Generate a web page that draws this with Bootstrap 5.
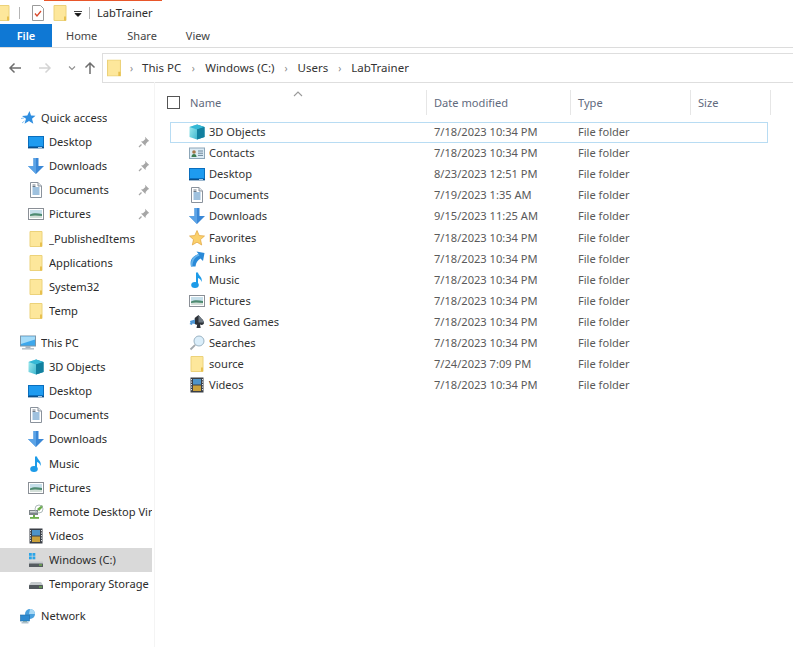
<!doctype html>
<html lang="en">
<head>
<meta charset="utf-8">
<title>LabTrainer</title>
<link href="https://cdn.jsdelivr.net/npm/bootstrap@5.3.0/dist/css/bootstrap.min.css" rel="stylesheet">
<style>
html,body{height:100%;overflow:hidden}
body{font-family:"Noto Sans","Open Sans","Liberation Sans",sans-serif;font-size:11.1px;color:#2b2b2b;background:#fff;line-height:16px}
svg{display:block;flex:none}
.shell{width:793px;height:647px;overflow:hidden}
.titlebar{height:24px;position:relative;padding-top:2px}
.accent{position:absolute;left:44px;top:0;width:118px;height:1px;background:#e8562a}
.tsep{width:1px;height:12px;background:#b5b5b5}
.tfolder{margin-right:8px}
.ttask{margin-left:10px}
.tfold2{margin-left:6px}
.tdrop{margin-left:5px}
.tsep2{margin-left:6px}
.ttext{margin-left:7px}
.tabstrip{height:24px;border-bottom:1px solid #dcdcdc}
.tabitem{height:23px;line-height:24px;color:#444;font-size:11px}
.tabfile{width:52px;background:#0f78d4;color:#fff;text-align:center;font-weight:600}
.tabhome{margin-left:14px}
.tabshare{margin-left:30px}
.tabview{margin-left:29px}
.addrrow{height:34px;padding-top:5px}
.arrowbox{width:102px}
.addrbox{height:30px;flex:1;border:1px solid #dedede;border-right:0;padding-left:4px;color:#333;font-size:11.5px}
.crumbsep{color:#8a8a8a;text-align:center;font-size:10px}
.crumb0{width:21px}
.crumb1{width:24px}
.crumb2{width:23px}
.crumb3{width:23px}
.mainrow{height:565px}
.navpane{width:155px;flex:none;border-right:1px solid #f4f4f4;padding-top:24px;overflow:hidden}
.navrow{height:24.12px;width:152px;white-space:nowrap;overflow:hidden;padding-left:28px}
.navtop{padding-left:20px}
.navrow .navtxt{margin-left:5px;overflow:hidden}
.navrow.navsel{background:#d9d9d9}
.navgap{height:8px}
.navpin{margin-left:auto;margin-right:2px}
.listpane{flex:1;min-width:0;padding-left:12px;position:relative}
.headrow{height:25px;margin-top:8px;color:#5f6a7d;margin-bottom:7px}
.colname{width:260px;position:relative}
.hcheck{width:13px;height:13px;border:1px solid #555;margin-right:10px;flex:none}
.coldate{width:144px}
.coltype{width:120px}
.colsize{width:80px}
.hcell{border-right:1px solid #e6e6e6;height:25px}
.hpad{padding-left:7px}
.sorter{position:absolute;left:126px;top:1px}
.filerow{height:21.1px;width:598px;margin-left:3px;border:1px solid transparent;color:#333;padding-bottom:1px}
.filerow.filesel{border-color:#b8dcf3}
.filename{width:256px;padding-left:18px;flex:none}
.filename .navtxt{margin-left:4px}
.filedate{width:144px;flex:none;color:#5a5a5a;padding-left:7px}
.filetype{width:120px;flex:none;color:#5a5a5a;padding-left:7px}
</style>
</head>
<body>
<svg width="0" height="0" class="position-absolute">
<defs>
<linearGradient id="g3d" x1="0" y1="0" x2="1" y2="1"><stop offset="0" stop-color="#a6eef0"/><stop offset="1" stop-color="#3fb7cf"/></linearGradient>
<symbol id="i-folder" viewBox="0 0 16 16"><path d="M2 0.500h12v15H2z" fill="#fde79b" stroke="#ecd27a"/><path d="M12 15.500v-4h2v4z" fill="#e8c04e"/></symbol>
<symbol id="i-desktop" viewBox="0 0 16 16"><rect x="0" y="2" width="16" height="12" fill="#0b84e3"/><rect x="0.500" y="2.500" width="15" height="10" fill="#1e9bf0" stroke="#0a6ebd"/><rect x="0" y="13" width="16" height="1.400" fill="#0b4f8a"/><rect x="10" y="13.200" width="4" height=".8" fill="#cfe6f8"/></symbol>
<symbol id="i-down" viewBox="0 0 16 16"><path d="M5.500 0h5v8H16l-8 8-8-8h5.500z" fill="#3a87d6"/><path d="M5.500 0h2.500v16l-8-8h5.500z" fill="#5ba3e6"/></symbol>
<symbol id="i-doc" viewBox="0 0 16 16"><path d="M2.500 .5h7.500l3.500 3.500v11.500h-11z" fill="#fff" stroke="#8a929c"/><path d="M10 .5v3.500h3.500" fill="#dfe5ea" stroke="#8a929c"/><path d="M4.500 6h7M4.500 8h7M4.500 10h7M4.500 12h7" stroke="#3f83bd"/><path d="M4.500 3h3M4.500 4.500h3" stroke="#6d7985"/></symbol>
<symbol id="i-pics" viewBox="0 0 16 16"><rect x=".5" y="2.500" width="15" height="11" fill="#fff" stroke="#8a8f96"/><rect x="2" y="4" width="12" height="8" fill="#c6dfea"/><path d="M2 8.500c3-1.500 7-1.500 12-.5v4H2z" fill="#4d8a70"/><path d="M2 10c4-1 8-.5 12 0v2H2z" fill="#d3dfd8"/></symbol>
<symbol id="i-pin" viewBox="0 0 12 12"><path d="M7 .8l4.200 4.200-1.300.6-2.200 2.400-.2 2-4.500-4.500 2-.2 2.400-2.200z" fill="#a6a6a6"/><path d="M3.500 8.500L1 11" stroke="#a6a6a6" stroke-width="1.200"/></symbol>
<symbol id="i-star" viewBox="0 0 16 16"><path d="M9.500 1l1.500 4.500 4.500.3-3.500 3 1.300 5-4.300-2.800-4.500 2.800 1.500-5L2 6l5.300-.5z" fill="#2f8ee0"/><path d="M4 8l-3 .5M4.500 11L2 13" stroke="#8cc4f0"/></symbol>
<symbol id="i-pc" viewBox="0 0 16 16"><rect x=".5" y="1" width="15" height="10" fill="#3ea8ec" stroke="#7d96a8"/><path d="M1 1.500h14v3L1 9z" fill="#a5dcf9"/><rect x="5.500" y="11" width="5" height="2" fill="#a9b5bf"/><rect x="2" y="13" width="12" height="1.600" fill="#b9c3cb"/></symbol>
<symbol id="i-3d" viewBox="0 0 16 16"><path d="M8 .5L.5 3v10L8 15.500z" fill="url(#g3d)"/><path d="M8 .5L15.500 3v10L8 15.500z" fill="#1389a8"/><path d="M.5 3L8 .5 15.500 3 8 5.500z" fill="#35b8d6"/><path d="M8 5.500v10l7.500-2.500V3z" fill="#12809f"/></symbol>
<symbol id="i-music" viewBox="0 0 16 16"><ellipse cx="6" cy="13" rx="3.800" ry="2.900" fill="#1d9be8"/><path d="M7 .5h2c.5 3.500 5 4.500 3.500 9.500-.5-2.500-2-3.500-3.500-4V13H7z" fill="#1d9be8"/></symbol>
<symbol id="i-rd" viewBox="0 0 16 16"><rect x="1" y="6" width="9" height="5" fill="#7d8488"/><rect x="2" y="7" width="7" height="1.500" fill="#d4d8da"/><path d="M9 5l5-4 1 2-4 4z" fill="#6cae4a"/><circle cx="11" cy="5" r="4" fill="none" stroke="#9aa" stroke-width=".8"/><rect x="5" y="11" width="2" height="2" fill="#6cae4a"/><rect x="2" y="13" width="9" height="1.800" fill="#6cae4a"/></symbol>
<symbol id="i-vid" viewBox="0 0 16 16"><rect x="1.500" y="0.500" width="13" height="15" fill="#3a3f46"/><rect x="4" y="2" width="8" height="5.500" fill="#4e93c7"/><rect x="4" y="8.500" width="8" height="5.500" fill="#c9a03a"/><path d="M2.500 2v12M13.500 2v12" stroke="#dfe3e6" stroke-dasharray="1.200 1.300"/></symbol>
<symbol id="i-win" viewBox="0 0 16 16"><rect x="1" y="1" width="2.800" height="2.800" fill="#29a4e8"/><rect x="4.500" y="1" width="2.800" height="2.800" fill="#29a4e8"/><rect x="1" y="4.500" width="2.800" height="2.800" fill="#29a4e8"/><rect x="4.500" y="4.500" width="2.800" height="2.800" fill="#29a4e8"/><rect x="1" y="11" width="14" height="4" rx=".5" fill="#555b60"/><rect x="1" y="9.500" width="14" height="2" fill="#c5cacd"/><rect x="11" y="12.500" width="3" height="1" fill="#7fd44a"/></symbol>
<symbol id="i-drive" viewBox="0 0 16 16"><path d="M3 6h10l2 3H1z" fill="#c5cacd"/><rect x="1" y="9" width="14" height="4" rx=".5" fill="#51575c"/><rect x="11" y="10.500" width="3" height="1" fill="#7fd44a"/></symbol>
<symbol id="i-net" viewBox="0 0 16 16"><circle cx="10" cy="6" r="5" fill="#4aa0dd"/><path d="M10 1a5 5 0 0 1 5 5h-6z" fill="#a8d8f4"/><rect x="0.500" y="7" width="9" height="6" fill="#2f8ad0" stroke="#1f6ba6" stroke-width=".6"/><rect x="3" y="13" width="4" height="1.200" fill="#8aa"/><rect x="1.500" y="14.200" width="7" height="1.200" fill="#9fb4c2"/></symbol>
<symbol id="i-contact" viewBox="0 0 16 16"><rect x=".5" y="3" width="15" height="10.500" fill="#dcebf5" stroke="#8da6b8"/><circle cx="5" cy="7" r="1.800" fill="#a5764a"/><path d="M2.500 12c0-2 1-3 2.500-3s2.500 1 2.500 3z" fill="#3f7d52"/><path d="M9 6h5M9 8.200h5M9 10.400h5" stroke="#6b8499"/></symbol>
<symbol id="i-fav" viewBox="0 0 16 16"><path d="M8 .5l2.200 5 5.300.5-4 3.600 1.200 5.400L8 12.200 3.300 15l1.200-5.400-4-3.600 5.300-.5z" fill="#fbd06b" stroke="#e0a33f" stroke-width=".7"/></symbol>
<symbol id="i-links" viewBox="0 0 16 16"><path d="M7.500 .5L15.500 2l-1.500 8-2.500-2.500C8.500 9.500 7 11.500 6.500 15.500H2C.5 9.500 3 5.500 9.500 3z" fill="#2a8ad8"/><path d="M9.500 3C4 5 1.500 9 2 15.500h1.500C3.500 9.500 6 6 10.500 4.500z" fill="#65b3ec"/></symbol>
<symbol id="i-game" viewBox="0 0 16 16"><path d="M9.500 1c1 2 5 4.500 5.500 7.500.2 2-2 3-4 2l.7 3.500H7.500l.7-3.500c-1.500.5-2 0-2.500-1V4z" fill="#2d3238"/><path d="M6 5.500L1 7l.5 2-1 1 2.500 1 .5-1.500L6 10z" fill="#4d97d6"/><path d="M9.500 1c1 2 5 4.500 5.500 7.500H9.500z" fill="#6e7882"/></symbol>
<symbol id="i-search" viewBox="0 0 16 16"><circle cx="10" cy="6" r="5" fill="#dbeefa" stroke="#9cb4c4"/><path d="M6.200 9.800L1.500 14.500" stroke="#a3a9ad" stroke-width="1.800"/></symbol>
<symbol id="i-task" viewBox="0 0 16 16"><path d="M2.500 .5h8l3 3v12h-11z" fill="#fff" stroke="#9a9a9a"/><path d="M5 8.500l2 2.500 4-5" fill="none" stroke="#d8492c" stroke-width="1.300"/></symbol>
</defs>
</svg>

<div class="shell d-flex flex-column">
  <div class="titlebar d-flex align-items-center">
    <span class="accent"></span>
    <svg width="11" height="16" viewBox="5 0 11 16" class="tfolder"><use href="#i-folder" width="16" height="16"/></svg>
    <span class="tsep"></span>
    <svg width="16" height="16" class="ttask"><use href="#i-task"/></svg>
    <svg width="16" height="16" class="tfold2"><use href="#i-folder"/></svg>
    <svg width="10" height="10" viewBox="0 0 10 10" class="tdrop"><path d="M1 3.500h8M2 5.500h6L5 8.500z" fill="#111" stroke="#111" stroke-width=".8"/></svg>
    <span class="tsep tsep2"></span>
    <span class="ttext text-nowrap">LabTrainer</span>
  </div>
  <div class="tabstrip d-flex">
    <div class="tabitem tabfile">File</div>
    <div class="tabitem tabhome">Home</div>
    <div class="tabitem tabshare">Share</div>
    <div class="tabitem tabview">View</div>
  </div>
  <div class="addrrow d-flex">
    <div class="arrowbox d-flex align-items-center ps-2">
      <svg width="14" height="12" viewBox="0 0 14 12"><path d="M13 6H2M6.500 1.500L2 6l4.500 4.500" fill="none" stroke="#6e6e6e" stroke-width="1.500"/></svg>
      <svg width="14" height="12" viewBox="0 0 14 12" class="ms-3"><path d="M1 6h11M7.500 1.500L12 6l-4.500 4.500" fill="none" stroke="#d4d4d4" stroke-width="1.500"/></svg>
      <svg width="8" height="6" viewBox="0 0 8 6" class="ms-3 me-1"><path d="M1 1.500l3 3 3-3" fill="none" stroke="#8f8f8f" stroke-width="1.100"/></svg>
      <svg width="12" height="14" viewBox="0 0 12 14" class="ms-1"><path d="M6 13V2M1.500 6.500L6 2l4.500 4.500" fill="none" stroke="#6e6e6e" stroke-width="1.500"/></svg>
    </div>
    <div class="addrbox d-flex align-items-center text-nowrap">
      <svg width="14" height="18" viewBox="1.500 0 13 16"><use href="#i-folder" width="16" height="16"/></svg>
      <span class="crumbsep crumb0">›</span><span>This PC</span>
      <span class="crumbsep crumb1">›</span><span>Windows (C:)</span>
      <span class="crumbsep crumb2">›</span><span>Users</span>
      <span class="crumbsep crumb3">›</span><span>LabTrainer</span>
    </div>
  </div>
  <div class="mainrow d-flex">
    <nav class="navpane">
      <div class="navrow navtop d-flex align-items-center"><svg width="16" height="16"><use href="#i-star"/></svg><span class="navtxt">Quick access</span></div>
      <div class="navrow d-flex align-items-center"><svg width="16" height="16"><use href="#i-desktop"/></svg><span class="navtxt">Desktop</span><svg class="navpin" width="12" height="12"><use href="#i-pin"/></svg></div>
      <div class="navrow d-flex align-items-center"><svg width="16" height="16"><use href="#i-down"/></svg><span class="navtxt">Downloads</span><svg class="navpin" width="12" height="12"><use href="#i-pin"/></svg></div>
      <div class="navrow d-flex align-items-center"><svg width="16" height="16"><use href="#i-doc"/></svg><span class="navtxt">Documents</span><svg class="navpin" width="12" height="12"><use href="#i-pin"/></svg></div>
      <div class="navrow d-flex align-items-center"><svg width="16" height="16"><use href="#i-pics"/></svg><span class="navtxt">Pictures</span><svg class="navpin" width="12" height="12"><use href="#i-pin"/></svg></div>
      <div class="navrow d-flex align-items-center"><svg width="16" height="16"><use href="#i-folder"/></svg><span class="navtxt">_PublishedItems</span></div>
      <div class="navrow d-flex align-items-center"><svg width="16" height="16"><use href="#i-folder"/></svg><span class="navtxt">Applications</span></div>
      <div class="navrow d-flex align-items-center"><svg width="16" height="16"><use href="#i-folder"/></svg><span class="navtxt">System32</span></div>
      <div class="navrow d-flex align-items-center"><svg width="16" height="16"><use href="#i-folder"/></svg><span class="navtxt">Temp</span></div>
      <div class="navgap"></div>
      <div class="navrow navtop d-flex align-items-center"><svg width="16" height="16"><use href="#i-pc"/></svg><span class="navtxt">This PC</span></div>
      <div class="navrow d-flex align-items-center"><svg width="16" height="16"><use href="#i-3d"/></svg><span class="navtxt">3D Objects</span></div>
      <div class="navrow d-flex align-items-center"><svg width="16" height="16"><use href="#i-desktop"/></svg><span class="navtxt">Desktop</span></div>
      <div class="navrow d-flex align-items-center"><svg width="16" height="16"><use href="#i-doc"/></svg><span class="navtxt">Documents</span></div>
      <div class="navrow d-flex align-items-center"><svg width="16" height="16"><use href="#i-down"/></svg><span class="navtxt">Downloads</span></div>
      <div class="navrow d-flex align-items-center"><svg width="16" height="16"><use href="#i-music"/></svg><span class="navtxt">Music</span></div>
      <div class="navrow d-flex align-items-center"><svg width="16" height="16"><use href="#i-pics"/></svg><span class="navtxt">Pictures</span></div>
      <div class="navrow d-flex align-items-center"><svg width="16" height="16"><use href="#i-rd"/></svg><span class="navtxt">Remote Desktop Virtual</span></div>
      <div class="navrow d-flex align-items-center"><svg width="16" height="16"><use href="#i-vid"/></svg><span class="navtxt">Videos</span></div>
      <div class="navrow navsel d-flex align-items-center"><svg width="16" height="16"><use href="#i-win"/></svg><span class="navtxt">Windows (C:)</span></div>
      <div class="navrow d-flex align-items-center"><svg width="16" height="16"><use href="#i-drive"/></svg><span class="navtxt">Temporary Storage</span></div>
      <div class="navgap"></div>
      <div class="navrow navtop d-flex align-items-center"><svg width="16" height="16"><use href="#i-net"/></svg><span class="navtxt">Network</span></div>
    </nav>
    <section class="listpane">
      <div class="headrow d-flex align-items-center">
        <div class="colname hcell d-flex align-items-center"><span class="hcheck"></span><span>Name</span>
          <svg class="sorter" width="10" height="6" viewBox="0 0 10 6"><path d="M1 5l4-4 4 4" fill="none" stroke="#9a9a9a" stroke-width="1.100"/></svg></div>
        <div class="coldate hcell hpad d-flex align-items-center">Date modified</div>
        <div class="coltype hcell hpad d-flex align-items-center">Type</div>
        <div class="colsize hcell hpad d-flex align-items-center">Size</div>
      </div>
      <div class="filerow filesel d-flex align-items-center"><div class="filename d-flex align-items-center"><svg width="16" height="16"><use href="#i-3d"/></svg><span class="navtxt">3D Objects</span></div><div class="filedate">7/18/2023 10:34 PM</div><div class="filetype">File folder</div></div>
      <div class="filerow d-flex align-items-center"><div class="filename d-flex align-items-center"><svg width="16" height="16"><use href="#i-contact"/></svg><span class="navtxt">Contacts</span></div><div class="filedate">7/18/2023 10:34 PM</div><div class="filetype">File folder</div></div>
      <div class="filerow d-flex align-items-center"><div class="filename d-flex align-items-center"><svg width="16" height="16"><use href="#i-desktop"/></svg><span class="navtxt">Desktop</span></div><div class="filedate">8/23/2023 12:51 PM</div><div class="filetype">File folder</div></div>
      <div class="filerow d-flex align-items-center"><div class="filename d-flex align-items-center"><svg width="16" height="16"><use href="#i-doc"/></svg><span class="navtxt">Documents</span></div><div class="filedate">7/19/2023 1:35 AM</div><div class="filetype">File folder</div></div>
      <div class="filerow d-flex align-items-center"><div class="filename d-flex align-items-center"><svg width="16" height="16"><use href="#i-down"/></svg><span class="navtxt">Downloads</span></div><div class="filedate">9/15/2023 11:25 AM</div><div class="filetype">File folder</div></div>
      <div class="filerow d-flex align-items-center"><div class="filename d-flex align-items-center"><svg width="16" height="16"><use href="#i-fav"/></svg><span class="navtxt">Favorites</span></div><div class="filedate">7/18/2023 10:34 PM</div><div class="filetype">File folder</div></div>
      <div class="filerow d-flex align-items-center"><div class="filename d-flex align-items-center"><svg width="16" height="16"><use href="#i-links"/></svg><span class="navtxt">Links</span></div><div class="filedate">7/18/2023 10:34 PM</div><div class="filetype">File folder</div></div>
      <div class="filerow d-flex align-items-center"><div class="filename d-flex align-items-center"><svg width="16" height="16"><use href="#i-music"/></svg><span class="navtxt">Music</span></div><div class="filedate">7/18/2023 10:34 PM</div><div class="filetype">File folder</div></div>
      <div class="filerow d-flex align-items-center"><div class="filename d-flex align-items-center"><svg width="16" height="16"><use href="#i-pics"/></svg><span class="navtxt">Pictures</span></div><div class="filedate">7/18/2023 10:34 PM</div><div class="filetype">File folder</div></div>
      <div class="filerow d-flex align-items-center"><div class="filename d-flex align-items-center"><svg width="16" height="16"><use href="#i-game"/></svg><span class="navtxt">Saved Games</span></div><div class="filedate">7/18/2023 10:34 PM</div><div class="filetype">File folder</div></div>
      <div class="filerow d-flex align-items-center"><div class="filename d-flex align-items-center"><svg width="16" height="16"><use href="#i-search"/></svg><span class="navtxt">Searches</span></div><div class="filedate">7/18/2023 10:34 PM</div><div class="filetype">File folder</div></div>
      <div class="filerow d-flex align-items-center"><div class="filename d-flex align-items-center"><svg width="16" height="16"><use href="#i-folder"/></svg><span class="navtxt">source</span></div><div class="filedate">7/24/2023 7:09 PM</div><div class="filetype">File folder</div></div>
      <div class="filerow d-flex align-items-center"><div class="filename d-flex align-items-center"><svg width="16" height="16"><use href="#i-vid"/></svg><span class="navtxt">Videos</span></div><div class="filedate">7/18/2023 10:34 PM</div><div class="filetype">File folder</div></div>
    </section>
  </div>
</div>
<script src="https://cdn.jsdelivr.net/npm/bootstrap@5.3.0/dist/js/bootstrap.bundle.min.js"></script>
</body>
</html>
